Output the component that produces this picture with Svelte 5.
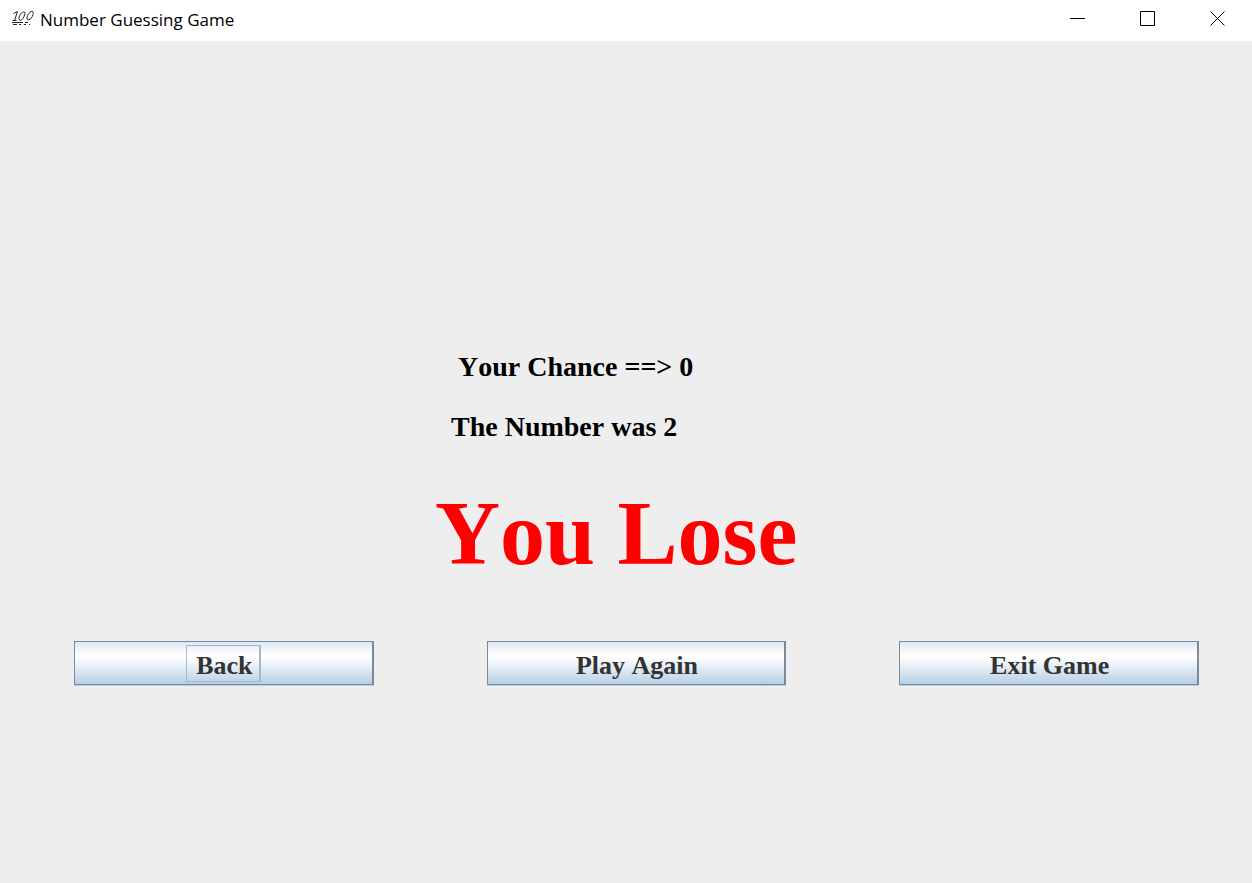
<script>
  const title = 'Number Guessing Game';
  let chances = $state(0);
  let secret = $state(2);
</script>

<div class="window">
  <header class="titlebar">
    <svg class="logo" width="24" height="18" viewBox="0 0 24 18" fill="none" stroke="#222" aria-hidden="true">
      <path d="M2.500 4.500L6.500 2.500L3.500 11.500M1.500 11.500H5.500" />
      <path d="M13.500 3C11 2 7.500 7 8 10C8.500 13 11.500 11 13 7.500C14 5 14.300 3.500 13.500 3Z" />
      <path d="M21.800 2.500C19.500 1.500 16 6 16 9C16 12 19.500 11 21.300 7.500C22.500 5 22.500 3 21.800 2.500Z" />
      <path d="M1 13.500H12M14 13.500H17M2 15.500H6M8 15.500H10M13 15.500H15M18 15.500H19" />
    </svg>
    <h1>{title}</h1>
    <div class="controls">
      <button type="button" aria-label="Minimize">
        <svg width="16" height="16" viewBox="0 0 16 16"><path d="M0 7.500H15" /></svg>
      </button>
      <button type="button" aria-label="Maximize">
        <svg width="16" height="16" viewBox="0 0 16 16"><path d="M.5.5H14.500V14.500H.5Z" /></svg>
      </button>
      <button type="button" aria-label="Close">
        <svg width="16" height="16" viewBox="0 0 16 16"><path d="M.5.5L14.500 14.500M14.500.5L.5 14.500" /></svg>
      </button>
    </div>
  </header>

  <main>
    <section class="messages">
      <p class="chance">Your Chance ==&gt; {chances}</p>
      <p class="answer">The Number was {secret}</p>
      <h2>You Lose</h2>
    </section>
    <nav class="actions">
      <button type="button"><span class="label focused">Back</span></button>
      <button type="button"><span class="label">Play Again</span></button>
      <button type="button"><span class="label">Exit Game</span></button>
    </nav>
  </main>
</div>

<style>
  :global(body) {
    margin: 0;
    background: #eee;
  }
  .window {
    display: flex;
    flex-direction: column;
    min-height: 100vh;
    background: #eee;
    font-family: 'Liberation Serif', 'Times New Roman', serif;
    font-kerning: none;
  }
  .titlebar {
    display: flex;
    align-items: center;
    box-sizing: border-box;
    height: 41px;
    padding-left: 11px;
    background: #fff;
  }
  .logo {
    margin: 0 5px 6px 0;
  }
  h1 {
    margin: 0;
    padding-bottom: 2px;
    font: 400 17px/24px 'Open Sans', 'Segoe UI', sans-serif;
    color: #000;
  }
  .controls {
    display: flex;
    margin: 0 -1px 0 auto;
  }
  .controls button {
    display: flex;
    align-items: center;
    justify-content: center;
    width: 70px;
    height: 40px;
    padding: 0 0 4px;
    border: 0;
    background: none;
  }
  .controls path {
    fill: none;
    stroke: #000;
  }
  main {
    flex: 1;
    padding: 306px 53px 0 74px;
  }
  .messages {
    padding-left: 361px;
    white-space: nowrap;
  }
  .messages p {
    margin: 0 0 20px;
    font-size: 28px;
    font-weight: 700;
    line-height: 40px;
    color: #000;
  }
  .messages .chance {
    padding-left: 23px;
  }
  .messages .answer {
    padding-left: 16px;
  }
  h2 {
    margin: 0;
    font-size: 90px;
    font-weight: 700;
    line-height: 134px;
    color: #f00;
  }
  .actions {
    display: grid;
    grid-template-columns: repeat(3, 1fr);
    gap: 113px;
    margin-top: 40px;
  }
  .actions button {
    display: flex;
    align-items: center;
    justify-content: center;
    height: 44px;
    padding: 0;
    border: 1px solid #7a8a99;
    border-right-width: 2px;
    background: linear-gradient(#dde8f3, #fff 30%, #fff 36%, #b8cfe5);
    box-shadow: 0 1px 0 #b8cfe5;
    color: #333;
    font: 700 26px/30px 'Liberation Serif', 'Times New Roman', serif;
    font-kerning: none;
  }
  .label {
    padding: 5px 6px 0 9px;
    border: 1px solid transparent;
    border-right-width: 2px;
  }
  .focused {
    border-color: #a3b8cc;
  }
</style>
